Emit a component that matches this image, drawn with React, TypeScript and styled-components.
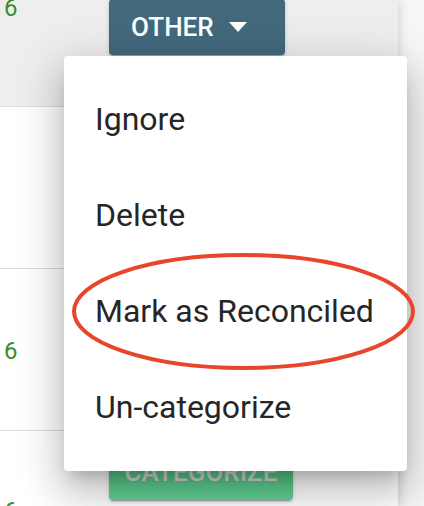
import React from "react";
import styled, { createGlobalStyle } from "styled-components";

const Global = createGlobalStyle`
  html, body { margin: 0; padding: 0; background: #f7f7f7; }
  body { font-family: Roboto, "Noto Sans", sans-serif; overflow: hidden; }
  * { box-sizing: border-box; }
`;

const Page = styled.div`
  position: relative;
  width: 424px;
  height: 506px;
  overflow: hidden;
`;

const Table = styled.div`
  width: 398px;
  height: 100%;
  background: #fff;
  box-shadow: 1px 0 10px rgba(0, 0, 0, 0.16);
  display: flex;
  flex-direction: column;
`;

const Row = styled.div<{ $bg?: string; $h: number }>`
  flex: none;
  height: ${(p) => p.$h}px;
  background: ${(p) => p.$bg ?? "#fff"};
  border-bottom: 1px solid #dcdcdc;
  display: grid;
  grid-template-columns: 109px 1fr;
  align-items: start;
`;

const Amount = styled.div<{ $top: number }>`
  margin-top: ${(p) => p.$top}px;
  padding-left: 4px;
  font-size: 24px;
  line-height: 24px;
  color: #3d8b2b;
`;

const ActionCell = styled.div<{ $top: number }>`
  margin-top: ${(p) => p.$top}px;
  display: flex;
`;

const Button = styled.button<{ $variant: "other" | "categorize" }>`
  height: 56px;
  border: 0;
  border-radius: 4px;
  font-family: Roboto, sans-serif;
  font-weight: 500;
  font-size: 26px;
  text-transform: uppercase;
  display: flex;
  align-items: center;
  gap: 15px;
  cursor: pointer;
  box-shadow: 0 3px 1px -2px rgba(0, 0, 0, 0.2), 0 2px 2px 0 rgba(0, 0, 0, 0.14),
    0 1px 5px 0 rgba(0, 0, 0, 0.12);
  ${(p) =>
    p.$variant === "other"
      ? `
    width: 176px;
    padding: 0 0 0 22px;
    justify-content: flex-start;
    background: #43697d;
    color: #ffffff;
  `
      : `
    width: 184px;
    padding: 0;
    justify-content: center;
    background: linear-gradient(180deg, #45b674 0%, #64d496 100%);
    color: #d4d8d5;
  `}
`;

const Caret = styled.span`
  width: 0;
  height: 0;
  border-left: 9.5px solid transparent;
  border-right: 9.5px solid transparent;
  border-top: 10px solid #ffffff;
`;

const Menu = styled.div`
  position: absolute;
  left: 64px;
  top: 56px;
  width: 343px;
  height: 415px;
  background: #ffffff;
  border-radius: 4px;
  padding: 15px 0 16px;
  box-shadow: 0 11px 15px -7px rgba(0, 0, 0, 0.2), 0 24px 38px 3px rgba(0, 0, 0, 0.14),
    0 9px 46px 8px rgba(0, 0, 0, 0.12);
`;

const MenuItem = styled.div`
  height: 96px;
  line-height: 96px;
  padding-left: 31px;
  font-size: 32px;
  color: #262626;
  white-space: nowrap;
`;

const Annotation = styled.svg`
  position: absolute;
  left: 0;
  top: 0;
  pointer-events: none;
`;

export default function App() {
  return (
    <>
      <Global />
      <Page>
        <Table>
          <Row $bg="#eeeeee" $h={107}>
            <Amount $top={-4}>6</Amount>
            <ActionCell $top={-1}>
              <Button $variant="other">
                Other
                <Caret />
              </Button>
            </ActionCell>
          </Row>
          <Row $h={162}>
            <div />
            <div />
          </Row>
          <Row $h={162}>
            <Amount $top={70}>6</Amount>
            <div />
          </Row>
          <Row $h={120}>
            <Amount $top={68}>6</Amount>
            <ActionCell $top={13}>
              <Button $variant="categorize">Categorize</Button>
            </ActionCell>
          </Row>
        </Table>
        <Menu>
          <MenuItem>Ignore</MenuItem>
          <MenuItem>Delete</MenuItem>
          <MenuItem>Mark as Reconciled</MenuItem>
          <MenuItem>Un-categorize</MenuItem>
        </Menu>
        <Annotation width="424" height="506" viewBox="0 0 424 506">
          <ellipse cx="243.5" cy="311.5" rx="169.5" ry="56.5" fill="none" stroke="#e8462c" strokeWidth="4" />
        </Annotation>
      </Page>
    </>
  );
}
